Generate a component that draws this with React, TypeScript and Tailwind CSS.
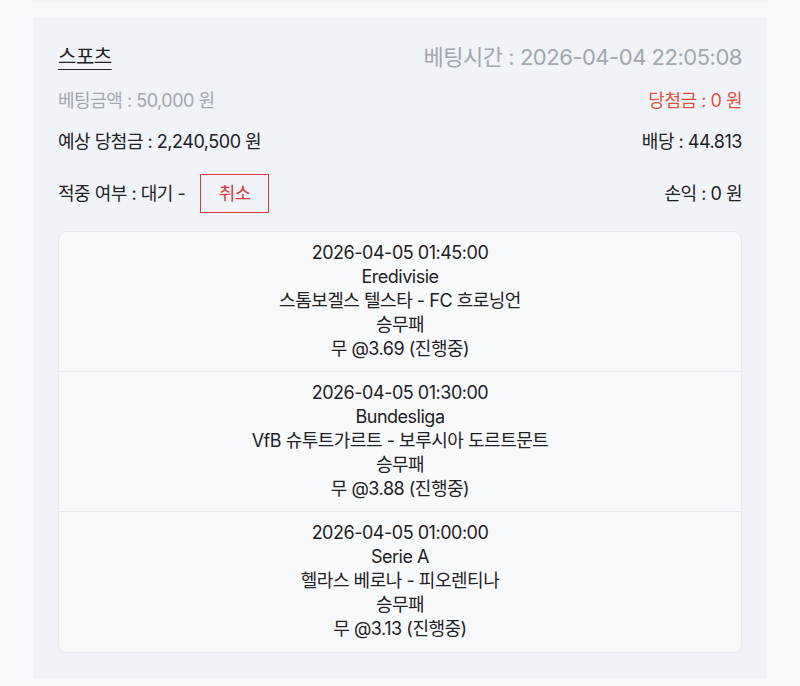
import React from 'react';

interface Game {
  time: string;
  league: string;
  teams: string;
  market: string;
  pick: string;
}

const games: Game[] = [
  {
    time: '2026-04-05 01:45:00',
    league: 'Eredivisie',
    teams: '스톰보겔스 텔스타 - FC 흐로닝언',
    market: '승무패',
    pick: '무 @3.69 (진행중)',
  },
  {
    time: '2026-04-05 01:30:00',
    league: 'Bundesliga',
    teams: 'VfB 슈투트가르트 - 보루시아 도르트문트',
    market: '승무패',
    pick: '무 @3.88 (진행중)',
  },
  {
    time: '2026-04-05 01:00:00',
    league: 'Serie A',
    teams: '헬라스 베로나 - 피오렌티나',
    market: '승무패',
    pick: '무 @3.13 (진행중)',
  },
];

const font = { fontFamily: 'Inter, "Noto Sans CJK KR", sans-serif' };

export default function App() {
  return (
    <div className="min-h-[686px] bg-[#f8f9fb] text-[#1f2124] tracking-[-0.03em]" style={font}>
      <div className="mx-[33px] h-[3px] bg-[#f2f4f7]" />
      <div className="mx-[33px] mt-[15px] bg-[#f0f3f7] px-[25px] pt-6 pb-[25px]">
        {/* header */}
        <div className="flex h-[30px] items-center justify-between">
          <span className="text-[20px] underline underline-offset-[5px] decoration-1">스포츠</span>
          <span className="text-[22px] text-[#a3a7ae]">베팅시간 : 2026-04-04 22:05:08</span>
        </div>

        <div className="mt-[14px] flex h-7 items-center justify-between text-[18px]">
          <span className="text-[#a3a7ae]">베팅금액 : 50,000 원</span>
          <span className="text-[#e0533f]">당첨금 : 0 원</span>
        </div>

        <div className="mt-[13px] flex h-7 items-center justify-between text-[18px]">
          <span>예상 당첨금 : 2,240,500 원</span>
          <span>배당 : 44.813</span>
        </div>

        <div className="mt-[19px] flex h-[39px] items-center justify-between text-[18px]">
          <div className="flex items-center">
            <span>적중 여부 : 대기 -</span>
            <button className="ml-[15px] flex h-[39px] w-[69px] items-center justify-center border border-[#d63a3a] text-[#d63a3a]">
              취소
            </button>
          </div>
          <span>손익 : 0 원</span>
        </div>

        {/* game list */}
        <div className="mt-[18px] rounded-lg border border-[#e6e9ee] bg-[#f8f9fb]">
          {games.map((g, i) => (
            <div
              key={g.time}
              className={
                'flex h-[140px] flex-col items-center pt-[9px] text-[18px] leading-6 ' +
                (i < games.length - 1 ? 'border-b border-[#e6e9ee]' : '')
              }
            >
              <div>{g.time}</div>
              <div>{g.league}</div>
              <div>{g.teams}</div>
              <div>{g.market}</div>
              <div>{g.pick}</div>
            </div>
          ))}
        </div>
      </div>
    </div>
  );
}
